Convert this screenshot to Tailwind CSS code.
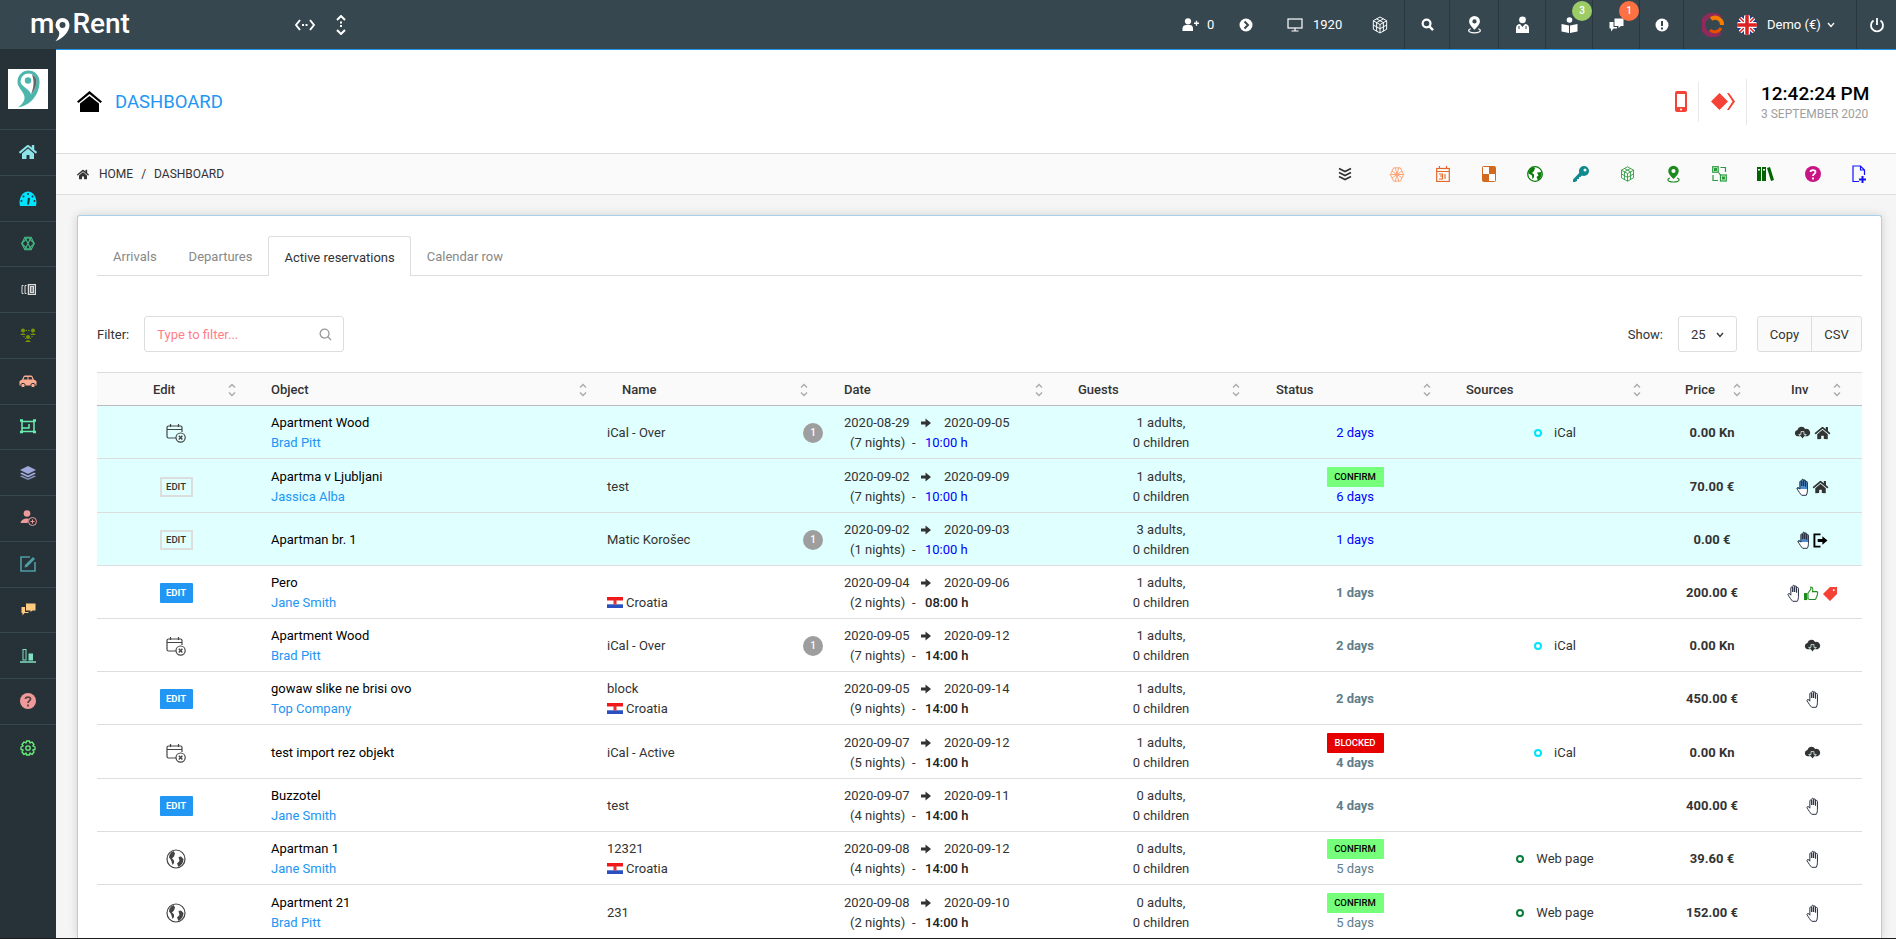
<!DOCTYPE html>
<html lang="en">
<head>
<meta charset="UTF-8">
<title>myRent Dashboard</title>
<script src="https://cdn.jsdelivr.net/npm/@tailwindcss/browser@4"></script>
</head>
<body class="h-screen overflow-hidden bg-[#f5f5f5] font-['Roboto',sans-serif] text-[13px] leading-[20px] text-[#333]">

<!-- shared icons -->
<svg class="absolute h-0 w-0">
  <defs><linearGradient id="hand-blue" x1="0" y1="0" x2="0" y2="1"><stop offset="0.6" stop-color="#4a8ccc"/><stop offset="0.6" stop-color="#fff"/></linearGradient></defs>
  <symbol id="i-home" viewBox="0 0 576 512"><path d="M280.37 148.26L96 300.11V464a16 16 0 0 0 16 16l112.06-.29a16 16 0 0 0 15.92-16V368a16 16 0 0 1 16-16h64a16 16 0 0 1 16 16v95.64a16 16 0 0 0 16 16.05L464 480a16 16 0 0 0 16-16V300L295.67 148.26a12.19 12.19 0 0 0-15.3 0zM571.6 251.47L488 182.56V44.05a12 12 0 0 0-12-12h-56a12 12 0 0 0-12 12v72.61L318.47 43a48 48 0 0 0-61 0L4.34 251.47a12 12 0 0 0-1.6 16.9l25.5 31A12 12 0 0 0 45.15 301l235.22-193.74a12.19 12.19 0 0 1 15.3 0L530.9 301a12 12 0 0 0 16.9-1.6l25.5-31a12 12 0 0 0-1.7-16.93z"/></symbol>
  <symbol id="i-sort" viewBox="0 0 8 14"><path d="M1 4.5L4 1.5L7 4.5M1 9.5L4 12.5L7 9.5" fill="none" stroke="#aaa" stroke-width="1.4"/></symbol>
  <symbol id="i-arrow" viewBox="0 0 10 10"><path d="M0 3.5H4.5V0.5L10 5L4.5 9.5V6.5H0Z" fill="#333"/></symbol>
  <symbol id="i-cal" viewBox="0 0 20 20"><g fill="none" stroke="#444" stroke-width="1.2"><path d="M10 15H2.5A1.5 1.5 0 0 1 1 13.5V4.5A1.5 1.5 0 0 1 2.5 3H14.5A1.5 1.5 0 0 1 16 4.5V9"/><path d="M1 6.5H16M4.5 1V4M12.5 1V4"/><circle cx="14.6" cy="14.6" r="4.6"/><path d="M12.8 12.8L16.4 16.4M16.4 12.8L12.8 16.4" stroke-width="1.4"/></g></symbol>
  <symbol id="i-globe" viewBox="0 0 20 20"><circle cx="10" cy="10" r="9" fill="#fff" stroke="#444" stroke-width="1.2"/><path d="M7.5 2C5 3 3 5.5 3 8.5C4 9.5 5 10.5 5.5 12.5L6.5 16L8 14V11.5L6 9.5L8 7.5L9 4.5ZM12.5 8L15 7.5L17.5 10C17.5 13.5 15.5 16.5 12.5 18L11 14.5L13.5 12Z" fill="#444"/></symbol>
  <symbol id="i-hand" viewBox="0 0 12.500 18"><path d="M5.5 17.3C3.800 15.800 2.400 13.200 0.900 11.100C0.200 10 1.600 8.900 2.600 9.900L3.600 11.200V3.900C3.600 2.600 5.500 2.600 5.500 3.900V8V2.300C5.500 0.900 7.400 0.900 7.400 2.300V8V2.900C7.400 1.600 9.300 1.600 9.300 2.900V8.500V4.400C9.300 3.100 11.200 3.100 11.200 4.400V12.200C11.200 14.400 10.800 15.900 10 17.300Z" stroke="#2b3244" stroke-width="1" stroke-linejoin="round"/></symbol>
  <symbol id="i-cloud" viewBox="0 0 18 14"><path d="M4 10.5A3.4 3.4 0 0 1 3.6 3.8A4.4 4.4 0 0 1 11.8 2.8A3.9 3.9 0 0 1 14.2 10.5Z" fill="#333"/><path d="M7.4 5.5H10.6V8.5H13L9 13L5 8.5H7.4Z" fill="#333" stroke="#e0ffff" stroke-width="0.8"/></symbol>
  <symbol id="i-exit" viewBox="0 0 16 16"><path d="M8 1.5H1.5V14.5H8" fill="none" stroke="#000" stroke-width="2"/><path d="M5 6.5H10V3.5L15.5 8L10 12.5V9.5H5Z" fill="#000"/></symbol>
  <symbol id="i-thumb" viewBox="0 0 16 16"><path d="M0.5 7.5H4V15H0.5Z" fill="#1c8a1c"/><path d="M4.8 7.5L7.8 3.5V1C9.8 0.8 10.5 3 9.6 6H14C15.2 6 15.5 7.2 14.8 8C15.4 8.8 15 9.8 14.3 10.2C14.6 11 14.2 11.8 13.5 12.2C13.6 13.4 12.8 14.5 11.8 14.5H6.5L4.8 13.5Z" fill="#fff" stroke="#1c8a1c" stroke-width="1.1"/></symbol>
  <symbol id="i-tag" viewBox="0 0 16 16"><path d="M0.5 8.5L8 1H15.5V8.5L8 16Z M12 3.4A1 1 0 1 0 12.01 3.4Z" fill="#f44336" fill-rule="evenodd"/></symbol>
  <symbol id="i-pin" viewBox="0 0 16 20"><path d="M8 0.8A5.8 5.8 0 0 0 2.2 6.6C2.2 10 6 13.5 8 15.6C10 13.5 13.8 10 13.8 6.6A5.8 5.8 0 0 0 8 0.8ZM8 4.4A2.3 2.3 0 1 1 8 9A2.3 2.3 0 0 1 8 4.4Z" fill-rule="evenodd"/><path d="M4 14.5C1.5 15.2 1 17 3 18C5.5 19.2 10.5 19.2 13 18C15 17 14.5 15.2 12 14.5" fill="none" stroke="currentColor" stroke-width="1.3"/></symbol>
  <symbol id="i-cube" viewBox="0 0 18 20"><g fill="none" stroke="currentColor" stroke-width="1.1"><path d="M9 1L16.5 5.2V14.8L9 19L1.5 14.8V5.2Z"/><path d="M1.5 5.2L9 9.5L16.5 5.2M9 9.5V19M5.2 3.1L12.8 7.3V17M12.8 3.1L5.2 7.3V17M1.5 10L9 14.2L16.5 10"/></g></symbol>
</svg>

<!-- top bar -->
<header class="flex h-[49px] items-center bg-[#37474f] text-white">
  <div class="flex w-[295px] items-center pl-[30px] text-[28px] leading-none font-medium">
    <span class="-mt-[2px]">m</span>
    <svg class="mt-[10px] h-[25px] w-[16px] shrink-0" viewBox="0 0 16 25"><path d="M8.5 1A7 7 0 0 0 1.500 8C1.500 10.500 3 12 4.500 14C6 16 5.500 20 1.500 24C8 22.500 15.500 15 15.500 8A7 7 0 0 0 8.500 1ZM8.500 5A3 3 0 1 1 8.500 11A3 3 0 0 1 8.500 5Z" fill="#fff" fill-rule="evenodd"/></svg>
    <span class="-mt-[2px] ml-[2px]">Rent</span>
  </div>
  <svg class="h-[14px] w-[20px]" viewBox="0 0 20 14"><path d="M5 2L1 7L5 12M15 2L19 7L15 12" fill="none" stroke="#fff" stroke-width="2"/><path d="M7 7H13" stroke="#fff" stroke-width="2" stroke-dasharray="2 1.5"/></svg>
  <svg class="ml-[20px] h-[20px] w-[12px]" viewBox="0 0 12 20"><path d="M2 5L6 1L10 5M2 15L6 19L10 15" fill="none" stroke="#fff" stroke-width="2"/><path d="M6 6.5V13.5" stroke="#fff" stroke-width="2" stroke-dasharray="2 1.5"/></svg>

  <div class="ml-auto flex h-full items-center">
    <svg class="h-[13px] w-[17px]" viewBox="0 0 17 13" fill="#fff"><circle cx="6" cy="3.3" r="3.1"/><path d="M0.5 13V10.5C0.5 8 2.5 7 4 7H8C9.5 7 11 8 11 10.5V13Z"/><path d="M12 4.5H13.8V2.7H15.2V4.5H17V5.9H15.2V7.7H13.8V5.9H12Z"/></svg>
    <span class="ml-[8px] w-[25px]">0</span>
    <svg class="ml-[7px] h-[14px] w-[14px]" viewBox="0 0 14 14"><circle cx="7" cy="7" r="6.5" fill="#fff"/><path d="M5.5 3.5L9 7L5.5 10.5" fill="none" stroke="#37474f" stroke-width="2"/></svg>
    <svg class="ml-[34px] h-[14px] w-[16px]" viewBox="0 0 16 14" fill="none" stroke="#fff" stroke-width="1.2"><rect x="1" y="1" width="14" height="9"/><path d="M8 10V13M4.5 13H11.5"/></svg>
    <span class="ml-[10px] w-[29px]">1920</span>
    <svg class="ml-[30px] mr-[16px] h-[18px] w-[16px] text-white"><use href="#i-cube"/></svg>
    <div class="flex h-full w-[45px] items-center justify-center border-l border-[#2b383e]">
      <svg class="h-[13px] w-[13px]" viewBox="0 0 14 14" fill="none" stroke="#fff"><circle cx="6" cy="6" r="4.2" stroke-width="2.4"/><path d="M9 9L13 13" stroke-width="2.6"/></svg>
    </div>
    <div class="flex h-full w-[49px] items-center justify-center border-l border-[#2b383e]">
      <svg class="h-[19px] w-[15px] fill-white text-white"><use href="#i-pin"/></svg>
    </div>
    <div class="flex h-full w-[47px] items-center justify-center border-l border-[#2b383e]">
      <svg class="h-[17px] w-[15px]" viewBox="0 0 15 17" fill="#fff"><circle cx="7.5" cy="3.8" r="3.4"/><path d="M1 17V12C1 9.5 3 8 5 8L7.5 11L10 8C12 8 14 9.5 14 12V17Z"/><path d="M4 10V13M11 10V13" stroke="#37474f"/></svg>
    </div>
    <div class="relative flex h-full w-[47px] items-center justify-center border-l border-[#2b383e]">
      <svg class="h-[16px] w-[17px]" viewBox="0 0 17 16" fill="#fff"><circle cx="8.5" cy="3" r="2.8"/><path d="M0.5 7L8 8.5V16L0.5 14.5ZM16.5 7L9 8.5V16L16.5 14.5Z"/></svg>
      <span class="absolute left-[26px] top-[1px] flex h-[20px] w-[20px] items-center justify-center rounded-full bg-[#9ccc65] text-[10px] font-medium text-white">3</span>
    </div>
    <div class="relative flex h-full w-[47px] items-center justify-center border-l border-[#2b383e]">
      <svg class="h-[14px] w-[15px]" viewBox="0 0 15 14" fill="#fff"><path d="M5.5 0.5H14.5V8H12L9.5 10V8H5.5Z"/><path d="M0.5 4H4.5V9H8V10.5H4.5L2 13.5V10.5H0.5Z"/></svg>
      <span class="absolute left-[26px] top-[1px] flex h-[20px] w-[20px] items-center justify-center rounded-full bg-[#ff7043] text-[10px] font-medium text-white">1</span>
    </div>
    <div class="flex h-full w-[44px] items-center justify-center border-l border-[#2b383e]">
      <svg class="h-[14px] w-[14px]" viewBox="0 0 14 14"><circle cx="7" cy="7" r="6.5" fill="#fff"/><path d="M7 3V8M7 9.5V11.5" stroke="#37474f" stroke-width="2"/></svg>
    </div>
    <div class="flex h-full w-[173px] items-center border-l border-[#2b383e] pl-[18px]">
      <svg class="h-[24px] w-[22px]" viewBox="0 0 22 24" fill="none"><path d="M18 5A10 10 0 1 0 18 19" stroke="#8e2a5c" stroke-width="5"/><path d="M20 12A7 7 0 0 0 9 6" stroke="#f57c00" stroke-width="4"/><path d="M19 15A7 7 0 0 1 8 17" stroke="#e65100" stroke-width="3"/></svg>
      <svg class="ml-[13px] h-[20px] w-[20px] rounded-full" viewBox="0 0 20 20"><rect width="20" height="20" fill="#1a3a8a"/><path d="M0 0L20 20M20 0L0 20" stroke="#fff" stroke-width="4"/><path d="M0 0L20 20M20 0L0 20" stroke="#d22" stroke-width="1.5"/><path d="M10 0V20M0 10H20" stroke="#fff" stroke-width="6"/><path d="M10 0V20M0 10H20" stroke="#d22" stroke-width="3.5"/></svg>
      <span class="ml-[10px]">Demo (€)</span>
      <svg class="ml-[6px] h-[6px] w-[8px]" viewBox="0 0 8 6"><path d="M1 1L4 4.5L7 1" fill="none" stroke="#fff" stroke-width="1.3"/></svg>
    </div>
    <div class="flex h-full w-[40px] items-center justify-center border-l border-[#2b383e]">
      <svg class="h-[16px] w-[16px]" viewBox="0 0 16 16" fill="none" stroke="#fff" stroke-width="1.8"><path d="M4.5 3.5A6 6 0 1 0 11.5 3.5"/><path d="M8 1V8"/></svg>
    </div>
  </div>
</header>

<div class="flex h-[889px]">
  <!-- sidebar -->
  <aside class="w-[56px] shrink-0 bg-[#263238]">
    <div class="flex h-[81px] items-center justify-center border-b border-[#37474f]">
      <div class="flex h-[40px] w-[40px] items-center justify-center bg-white">
        <svg class="h-[38px] w-[23px]" viewBox="0 0 23 38"><path d="M11.500 0.500A11 11 0 0 0 0.500 11.500C0.500 17 5 20 7 25C8.500 29 7 33 1 37.500C12 36 22.500 26 22.500 11.500A11 11 0 0 0 11.500 0.500Z" fill="#4db6ac"/><path d="M11.500 3.500A8 8 0 0 1 19.500 11.500C19.500 16 17 21 14 24.500C13 19 3.500 16 3.500 11.500A8 8 0 0 1 11.500 3.500Z" fill="#fff"/><path d="M15 4.500A8 8 0 0 1 19.500 11.500C19.500 16 17 21 14 24.500C16 19 18 13 15 4.500Z" fill="#666"/><circle cx="11" cy="10.500" r="3.200" fill="#4db6ac"/></svg>
      </div>
    </div>
    <nav class="flex flex-col">
      <a class="flex h-[45.75px] items-center justify-center border-b border-[#37474f]"><svg class="h-[16px] w-[18px] fill-[#8de4e8]"><use href="#i-home"/></svg></a>
      <a class="flex h-[45.75px] items-center justify-center border-b border-[#37474f]"><svg class="h-[15px] w-[18px]" viewBox="0 0 18 15"><path d="M1 15C-1 7 4 0.500 9 0.500C14 0.500 19 7 17 15Z" fill="#00e5ff"/><path d="M9 13.500L10 7" stroke="#263238" stroke-width="2"/><path d="M4.500 5.500V5.600M13.500 5.500V5.600M9 3V3.100M2.500 10V10.100M15.500 10V10.100" stroke="#263238" stroke-width="2" stroke-linecap="round"/></svg></a>
      <a class="flex h-[45.75px] items-center justify-center border-b border-[#37474f]"><svg class="h-[15px] w-[14px]" viewBox="0 0 18 18" fill="none" stroke="#43b581" stroke-width="1.500"><path d="M5 1H13L17 9L13 17H5L1 9Z"/><path d="M1 9L9 1L17 9L9 17ZM5 1L13 17M13 1L5 17"/></svg></a>
      <a class="flex h-[45.75px] items-center justify-center border-b border-[#37474f]"><svg class="h-[11px] w-[15px]" viewBox="0 0 15 11" fill="none" stroke="#ddd"><path d="M2.500 1.500H1V9.500H2.500M5.500 1.500H4V9.500H5.500"/><rect x="7.500" y="0.500" width="7" height="10" stroke-width="1.500"/><rect x="9.500" y="2.500" width="3" height="6" fill="#888"/></svg></a>
      <a class="flex h-[45.75px] items-center justify-center border-b border-[#37474f]"><svg class="h-[14px] w-[16px]" viewBox="0 0 16 14" fill="#7c9a00"><circle cx="3" cy="2.500" r="2"/><path d="M0.500 7C0.500 5 5.500 5 5.500 7Z"/><circle cx="13" cy="2.500" r="2"/><path d="M10.500 7C10.500 5 15.500 5 15.500 7Z"/><circle cx="8" cy="9" r="2"/><path d="M5.500 14C5.500 11.500 10.500 11.500 10.500 14Z"/><path d="M5.500 2.500H10.500M3.500 8L6 11M12.500 8L10 11" stroke="#7c9a00" stroke-dasharray="1.500 1"/></svg></a>
      <a class="flex h-[45.75px] items-center justify-center border-b border-[#37474f]"><svg class="h-[13px] w-[18px]" viewBox="0 0 18 13" fill="#ffab91"><path d="M0.500 6.500C0.500 5.500 2 5 3 4.700L4.500 1.500C4.800 0.800 5.500 0.500 6 0.500H12C12.500 0.500 13.200 0.800 13.500 1.500L15 4.700C16 5 17.500 5.500 17.500 6.500V10.500H0.500Z"/><circle cx="4" cy="10.500" r="2.200" stroke="#263238"/><circle cx="14" cy="10.500" r="2.200" stroke="#263238"/><path d="M5.500 2H8.500V4.500H4.500ZM9.500 2H12.500L13.500 4.500H9.500Z" fill="#263238"/></svg></a>
      <a class="flex h-[45.75px] items-center justify-center border-b border-[#37474f]"><svg class="h-[15px] w-[16px]" viewBox="0 0 16 15" fill="none" stroke="#69f0ae" stroke-width="1.500"><path d="M2 2.500H14V12.500H2ZM2 9H9V5"/><path d="M0 1.500H3M13 1.500H16M0 13H3M13 13H16" stroke-width="2.500"/></svg></a>
      <a class="flex h-[45.75px] items-center justify-center border-b border-[#37474f]"><svg class="h-[14px] w-[16px]" viewBox="0 0 16 14" fill="#9fa8da"><path d="M8 0L16 4L8 8L0 4Z"/><path d="M2 6.500L8 9.500L14 6.500L16 7.500L8 11.500L0 7.500Z"/><path d="M2 9.500L8 12.500L14 9.500L16 10.500L8 14L0 10.500Z" opacity=".8"/></svg></a>
      <a class="flex h-[45.75px] items-center justify-center border-b border-[#37474f]"><svg class="h-[16px] w-[17px]" viewBox="0 0 17 16"><circle cx="7" cy="3.500" r="3.300" fill="#ef9a9a"/><path d="M0.500 13C1 10 3.500 8.500 7 8.500C8.500 8.500 9 9 9 9L7.500 13Z" fill="#ef9a9a"/><circle cx="12.500" cy="11.500" r="4" fill="#263238" stroke="#ef9a9a"/><path d="M10.500 11.500H14.500M12.500 9.500V13.500" stroke="#ef9a9a"/></svg></a>
      <a class="flex h-[45.75px] items-center justify-center border-b border-[#37474f]"><svg class="h-[16px] w-[16px]" viewBox="0 0 16 16" fill="none" stroke="#4f9da6" stroke-width="1.600"><path d="M10 1H1V15H15V6"/><path d="M5 9L13 1L15 3L7 11L4.500 11.500Z" fill="#4f9da6" stroke="none"/></svg></a>
      <a class="flex h-[45.75px] items-center justify-center border-b border-[#37474f]"><svg class="h-[13px] w-[15px]" viewBox="0 0 15 13" fill="#ffcc80"><path d="M5 0.500H14.500V7.500H11.500L9.500 9V7.500H5Z"/><path d="M0.500 4H4V9H7.500V10H3.500L1.500 12.500V10H0.500Z"/></svg></a>
      <a class="flex h-[45.75px] items-center justify-center border-b border-[#37474f]"><svg class="h-[14px] w-[16px]" viewBox="0 0 16 14" fill="none" stroke="#80e0c0"><rect x="3" y="0.500" width="3" height="10.500"/><rect x="9" y="5" width="3.500" height="6" fill="#80e0c0"/><path d="M0 13H16" stroke-width="1.500"/></svg></a>
      <a class="flex h-[45.75px] items-center justify-center border-b border-[#37474f]"><svg class="h-[16px] w-[16px]" viewBox="0 0 16 16"><circle cx="8" cy="8" r="8" fill="#ef9a9a"/><path d="M5.500 6C5.500 3.500 10.500 3.500 10.500 6C10.500 8 8 7.800 8 10M8 11.500V13.500" fill="none" stroke="#5d4040" stroke-width="1.800"/></svg></a>
      <a class="flex h-[45.75px] items-center justify-center"><svg class="h-[16px] w-[16px]" viewBox="0 0 16 16" fill="none" stroke="#69f07a" stroke-width="1.300"><circle cx="8" cy="8" r="2.200"/><path d="M6.500 1H9.500L10 3L12 2L14 4.500L12.800 6L15 7V9.500L12.800 10L14 12L12 14.500L10 13L9.500 15H6.500L6 13L4 14.500L2 12L3.200 10L1 9.500V7L3.200 6L2 4.500L4 2L6 3Z" stroke-linejoin="round"/></svg></a>
    </nav>
  </aside>

  <main class="min-w-0 flex-1 overflow-hidden">
    <!-- title -->
    <div class="flex h-[105px] items-center border-y border-t-[#2196f3] border-b-[#ddd] bg-white pl-[21px] pr-[14px]">
      <svg class="h-[21px] w-[25px]" viewBox="0 0 25 21"><path d="M12.500 0L25 10.500L23.500 12L12.500 3L1.500 12L0 10.500Z"/><path d="M12.500 5L22 12.500V21H3V12.500Z"/></svg>
      <h1 class="ml-[13px] text-[18.500px] text-[#2196f3]">DASHBOARD</h1>
      <div class="ml-auto flex items-center">
        <svg class="h-[21px] w-[12px]" viewBox="0 0 12 21"><rect x="0" y="0" width="12" height="21" rx="2" fill="#f44336"/><rect x="2" y="3" width="8" height="13" fill="#fff"/><circle cx="6" cy="18.500" r="1" fill="#fff"/></svg>
        <div class="ml-[11px] h-[40px] w-px bg-[#e8e8e8]"></div>
        <svg class="ml-[12px] h-[17px] w-[24px]" viewBox="0 0 24 17" fill="#f44336"><path d="M8.500 0L17 8.500L8.500 17L0 8.500Z"/><path d="M16 0H18L24 8.500L18 17H16L21.500 8.500Z"/></svg>
        <div class="ml-[11px] h-[46px] w-px bg-[#e8e8e8]"></div>
        <div class="ml-[14px] w-[121px]">
          <div class="text-[19px] leading-[24px] font-medium text-black">12:42:24 PM</div>
          <div class="mt-[1px] text-[12px] leading-[14px] text-[#9e9e9e]">3 SEPTEMBER 2020</div>
        </div>
      </div>
    </div>

    <!-- breadcrumb -->
    <div class="flex h-[41px] items-center border-b border-[#ddd] bg-[#fafafa] pl-[21px] pr-[14px] text-[12px] uppercase">
      <svg class="h-[11px] w-[12px] fill-[#333]"><use href="#i-home"/></svg>
      <span class="ml-[10px]">Home</span><span class="ml-[8px]">/</span><span class="ml-[8px]">Dashboard</span>
      <div class="ml-auto flex items-center">
        <span class="mr-[6px] flex w-[46px] justify-center"><svg class="h-[14px] w-[14px]" viewBox="0 0 14 14" fill="none" stroke="#333" stroke-width="1.800"><path d="M1 1.500L7 4.500L13 1.500M1 5.500L7 8.500L13 5.500M1 9.500L7 12.500L13 9.500"/></svg></span>
        <span class="flex w-[46px] justify-center"><svg class="h-[15px] w-[16px]" viewBox="0 0 18 18" fill="none" stroke="#ff9e6d" stroke-width="1.100"><path d="M5 1H13L17 9L13 17H5L1 9Z"/><path d="M3 5L15 13M3 13L15 5M1 9H17M7 1L11 17M11 1L7 17"/></svg></span>
        <span class="flex w-[46px] justify-center"><svg class="h-[16px] w-[14px]" viewBox="0 0 14 16" fill="none" stroke="#e2682a" stroke-width="1.200"><rect x="0.700" y="2.500" width="12.600" height="13"/><path d="M3.500 0V3M10.500 0V3M0.700 5.500H13.300"/><path d="M3 8H6.500V10H4M6.500 10V13H3M9 8V13" stroke-width="1.100"/></svg></span>
        <span class="flex w-[46px] justify-center"><svg class="h-[16px] w-[14px]" viewBox="0 0 14 16"><rect width="14" height="16" rx="2" fill="#d2691e"/><rect x="1" y="1" width="6" height="7" fill="#fff"/><rect x="7" y="8" width="6" height="7" fill="#fff"/></svg></span>
        <span class="flex w-[46px] justify-center"><svg class="h-[16px] w-[16px]" viewBox="0 0 16 16"><circle cx="8" cy="8" r="7.300" fill="#fff" stroke="#0a7d0a" stroke-width="1.300"/><path d="M6.500 1C3.500 2 1.500 4.500 1.500 7.500L5 9.500L5.500 13.500L7 11V8.500L5 7L7 5L8 2ZM10 6.500L14.500 6C15 9 13.500 13 11 14.500L9.500 11L11.500 9.500Z" fill="#0a7d0a"/></svg></span>
        <span class="flex w-[46px] justify-center"><svg class="h-[16px] w-[16px]" viewBox="0 0 16 16" fill="#0f8a8f"><path d="M11 0A5 5 0 0 1 11 10C10 10 9.300 9.800 8.800 9.500L7.500 11H6V13H4V15L2 16H0V13.500L6.200 7C6 6.400 6 5.700 6 5A5 5 0 0 1 11 0ZM12 2.500A1.500 1.500 0 1 0 12 5.500A1.500 1.500 0 0 0 12 2.500Z" fill-rule="evenodd"/></svg></span>
        <span class="flex w-[46px] justify-center"><svg class="h-[16px] w-[15px] text-[#2a9a3c]"><use href="#i-cube"/></svg></span>
        <span class="flex w-[46px] justify-center"><svg class="h-[18px] w-[15px] fill-[#1d8a1d] text-[#1d8a1d]"><use href="#i-pin"/></svg></span>
        <span class="flex w-[46px] justify-center"><svg class="h-[16px] w-[15px]" viewBox="0 0 15 16" fill="none" stroke="#2a9a3c" stroke-width="1.200"><rect x="0.700" y="0.700" width="5.500" height="5.500"/><rect x="8.500" y="9" width="5.800" height="6"/><rect x="2.500" y="2.500" width="2" height="2" fill="#2a9a3c"/><rect x="10.500" y="11" width="2" height="2" fill="#2a9a3c"/><path d="M8.500 1.500H13.500V6M1 9V14.500H6M6.500 6.500L8.500 9"/></svg></span>
        <span class="flex w-[47px] justify-center"><svg class="h-[14px] w-[17px]" viewBox="0 0 17 14" fill="#006400"><rect width="4" height="14"/><rect x="5" y="0" width="4" height="14"/><path d="M10 1L13 0L17 13L14 14Z"/><rect x="1" y="2" width="2" height="1.500" fill="#fff"/><rect x="6" y="2" width="2" height="1.500" fill="#fff"/></svg></span>
        <span class="flex w-[47px] justify-center"><svg class="h-[16px] w-[16px]" viewBox="0 0 16 16"><circle cx="8" cy="8" r="8" fill="#c71585"/><path d="M5.500 6C5.500 3.500 10.500 3.500 10.500 6C10.500 8 8 7.800 8 10M8 11.500V13.500" fill="none" stroke="#fff" stroke-width="1.800"/></svg></span>
        <span class="flex w-[46px] justify-center"><svg class="h-[18px] w-[14px]" viewBox="0 0 14 18" fill="none" stroke="#1212ff" stroke-width="1.200"><path d="M7 16.500H1V1H8.500L12.500 5V10M8.500 1V5H12.500"/><path d="M7 14.500H14M10.500 11V18" stroke-width="2"/></svg></span>
      </div>
    </div>

    <!-- card -->
    <section class="mt-[20px] ml-[21px] mr-[14px] h-[723px] rounded-t-[3px] border border-b-0 border-[#a8d0ea] bg-white pt-[20px] pl-[19px] pr-[19px] shadow-[0_0_10px_rgba(0,0,0,0.15)]">
      <div class="flex h-[40px] border-b border-[#ddd] text-[#888]">
        <a class="flex h-[40px] items-center px-[16px] pt-[2px]">Arrivals</a>
        <a class="flex h-[40px] items-center px-[16px] pt-[2px]">Departures</a>
        <a class="flex h-[40px] items-center rounded-t-[3px] border border-b-0 border-[#ddd] bg-white px-[15px] pt-[2px] text-[#333]">Active reservations</a>
        <a class="flex h-[40px] items-center px-[16px] pt-[2px]">Calendar row</a>
      </div>

      <div class="mt-[40px] flex h-[36px] items-center">
        <span class="pt-[2px]">Filter:</span>
        <div class="ml-[15px] flex h-[36px] w-[200px] items-center justify-between rounded-[3px] border border-[#ddd] pl-[12px] pr-[11px]">
          <input class="w-[150px] pt-[2px] outline-none placeholder:text-[#ff7f88]" placeholder="Type to filter...">
          <svg class="h-[13px] w-[13px]" viewBox="0 0 14 14" fill="none" stroke="#999" stroke-width="1.400"><circle cx="6" cy="6" r="4.800"/><path d="M9.500 9.500L13 13"/></svg>
        </div>
        <span class="ml-auto pt-[2px]">Show:</span>
        <div class="ml-[15px] flex h-[36px] w-[59px] items-center rounded-[3px] border border-[#ddd] pl-[12px] pt-[2px]">25
          <svg class="ml-[10px] h-[6px] w-[8px]" viewBox="0 0 8 6"><path d="M1 1L4 4.500L7 1" fill="none" stroke="#333" stroke-width="1.300"/></svg>
        </div>
        <div class="ml-[20px] flex h-[36px] rounded-[3px] border border-[#ddd] bg-[#fafafa]">
          <span class="flex w-[54px] items-center justify-center border-r border-[#ddd] pt-[2px]">Copy</span>
          <span class="flex w-[49px] items-center justify-center pt-[2px]">CSV</span>
        </div>
      </div>

      <table class="mt-[20px] w-[1765px] table-fixed">
        <colgroup>
          <col class="w-[158px]"><col class="w-[336px]"><col class="w-[237px]"><col class="w-[234px]"><col class="w-[198px]"><col class="w-[190px]"><col class="w-[200px]"><col class="w-[124px]"><col class="w-[88px]">
        </colgroup>
        <thead>
          <tr class="h-[33px] border-y border-t-[#ddd] border-b-[#bbb] bg-[#fafafa] text-left font-medium [&>th]:pt-[2px]">
            <th class="font-medium"><div class="flex items-center justify-between pl-[56px] pr-[19px]">Edit<svg class="h-[14px] w-[8px]"><use href="#i-sort"/></svg></div></th>
            <th class="font-medium"><div class="flex items-center justify-between pl-[16px] pr-[4px]">Object<svg class="h-[14px] w-[8px]"><use href="#i-sort"/></svg></div></th>
            <th class="font-medium"><div class="flex items-center justify-between pl-[31px] pr-[20px]">Name<svg class="h-[14px] w-[8px]"><use href="#i-sort"/></svg></div></th>
            <th class="font-medium"><div class="flex items-center justify-between pl-[16px] pr-[19px]">Date<svg class="h-[14px] w-[8px]"><use href="#i-sort"/></svg></div></th>
            <th class="font-medium"><div class="flex items-center justify-between pl-[16px] pr-[20px]">Guests<svg class="h-[14px] w-[8px]"><use href="#i-sort"/></svg></div></th>
            <th class="font-medium"><div class="flex items-center justify-between pl-[16px] pr-[19px]">Status<svg class="h-[14px] w-[8px]"><use href="#i-sort"/></svg></div></th>
            <th class="font-medium"><div class="flex items-center justify-between pl-[16px] pr-[9px]">Sources<svg class="h-[14px] w-[8px]"><use href="#i-sort"/></svg></div></th>
            <th class="font-medium"><div class="flex items-center justify-between pl-[35px] pr-[33px]">Price<svg class="h-[14px] w-[8px]"><use href="#i-sort"/></svg></div></th>
            <th class="font-medium"><div class="flex items-center justify-between pl-[17px] pr-[21px]">Inv<svg class="h-[14px] w-[8px]"><use href="#i-sort"/></svg></div></th>
          </tr>
        </thead>
        <tbody id="rows"></tbody>
      </table>
    </section>
  </main>
</div>
<div class="h-[1px] bg-[#1c1c1c]"></div>

<script>
  const flag = '<svg class="mr-[3px] inline-block h-[11px] w-[16px] align-[-1px]" viewBox="0 0 16 11"><rect width="16" height="3.700" fill="#f01818"/><rect y="3.700" width="16" height="3.700" fill="#fff"/><rect y="7.300" width="16" height="3.700" fill="#2a50c0"/><rect x="6.500" y="2.500" width="3" height="5" fill="#d33"/></svg>';
  const icons = {
    cal: '<svg class="mx-auto block h-[20px] w-[20px]"><use href="#i-cal"/></svg>',
    globe: '<svg class="mx-auto block h-[20px] w-[20px]"><use href="#i-globe"/></svg>',
    editGray: '<span class="mx-auto block h-[20px] w-[33px] border-2 border-[#ddd] text-center text-[9.500px] leading-[16px] font-medium">EDIT</span>',
    editBlue: '<span class="mx-auto block h-[20px] w-[33px] rounded-[1px] bg-[#2196f3] text-center text-[9.500px] leading-[20px] font-bold text-white">EDIT</span>'
  };
  const inv = {
    cloud: '<svg class="h-[14px] w-[17px]"><use href="#i-cloud"/></svg>',
    house: '<svg class="h-[14px] w-[17px] fill-[#333]"><use href="#i-home"/></svg>',
    handBlue: '<svg class="h-[18px] w-[13px]" fill="url(#hand-blue)"><use href="#i-hand"/></svg>',
    hand: '<svg class="h-[18px] w-[13px] fill-white"><use href="#i-hand"/></svg>',
    exit: '<svg class="h-[15px] w-[15px]"><use href="#i-exit"/></svg>',
    thumb: '<svg class="h-[15px] w-[16px]"><use href="#i-thumb"/></svg>',
    tag: '<svg class="h-[15px] w-[16px]"><use href="#i-tag"/></svg>'
  };
  const badgeGreen = '<span class="mx-auto block h-[20px] w-[57px] rounded-[1px] bg-[#76ff7a] text-[9.500px] leading-[20px] font-medium text-black">CONFIRM</span>';
  const badgeRed = '<span class="mx-auto block h-[20px] w-[57px] rounded-[1px] bg-[#e60000] text-[9.500px] leading-[20px] font-medium text-white">BLOCKED</span>';
  const ical = '<span class="flex items-center justify-center pl-[10px]"><span class="mr-[12px] h-[8px] w-[8px] rounded-full border-2 border-[#00e5ff]"></span>iCal</span>';
  const web = '<span class="flex items-center justify-center pl-[10px]"><span class="mr-[12px] h-[8px] w-[8px] rounded-full border-2 border-[#0a7d3c]"></span>Web page</span>';

  // one entry per reservation, in the order of the table
  const data = [
    {h:53,hi:1,ic:'cal',t:'Apartment Wood',p:'Brad Pitt',n:['iCal - Over'],b:1,d1:'2020-08-29',d2:'2020-09-05',nn:7,tm:'10:00 h',g:1,day:'2 days',dc:'blue',src:ical,pr:'0.00 Kn',inv:['cloud','house']},
    {h:54,hi:1,ic:'editGray',t:'Apartma v Ljubljani',p:'Jassica Alba',n:['test'],d1:'2020-09-02',d2:'2020-09-09',nn:7,tm:'10:00 h',g:1,day:'6 days',dc:'blue',st:badgeGreen,pr:'70.00 €',inv:['handBlue','house']},
    {h:53,hi:1,ic:'editGray',t:'Apartman br. 1',n:['Matic Korošec'],b:1,d1:'2020-09-02',d2:'2020-09-03',nn:1,tm:'10:00 h',g:3,day:'1 days',dc:'blue',pr:'0.00 €',inv:['handBlue','exit']},
    {h:53,ic:'editBlue',t:'Pero',p:'Jane Smith',n:['','F'],d1:'2020-09-04',d2:'2020-09-06',nn:2,tm:'08:00 h',g:1,day:'1 days',dc:'gray',pr:'200.00 €',inv:['hand','thumb','tag']},
    {h:53,ic:'cal',t:'Apartment Wood',p:'Brad Pitt',n:['iCal - Over'],b:1,d1:'2020-09-05',d2:'2020-09-12',nn:7,tm:'14:00 h',g:1,day:'2 days',dc:'gray',src:ical,pr:'0.00 Kn',inv:['cloud']},
    {h:53,ic:'editBlue',t:'gowaw slike ne brisi ovo',p:'Top Company',n:['block','F'],d1:'2020-09-05',d2:'2020-09-14',nn:9,tm:'14:00 h',g:1,day:'2 days',dc:'gray',pr:'450.00 €',inv:['hand']},
    {h:54,ic:'cal',t:'test import rez objekt',n:['iCal - Active'],d1:'2020-09-07',d2:'2020-09-12',nn:5,tm:'14:00 h',g:1,day:'4 days',dc:'gray',st:badgeRed,src:ical,pr:'0.00 Kn',inv:['cloud']},
    {h:53,ic:'editBlue',t:'Buzzotel',p:'Jane Smith',n:['test'],d1:'2020-09-07',d2:'2020-09-11',nn:4,tm:'14:00 h',g:0,day:'4 days',dc:'gray',pr:'400.00 €',inv:['hand']},
    {h:53,ic:'globe',t:'Apartman 1',p:'Jane Smith',n:['12321','F'],d1:'2020-09-08',d2:'2020-09-12',nn:4,tm:'14:00 h',g:0,day:'5 days',dc:'plain',st:badgeGreen,src:web,pr:'39.60 €',inv:['hand']},
    {h:54,ic:'globe',t:'Apartment 21',p:'Brad Pitt',n:['231'],d1:'2020-09-08',d2:'2020-09-10',nn:2,tm:'14:00 h',g:0,day:'5 days',dc:'plain',st:badgeGreen,src:web,pr:'152.00 €',inv:['hand']}
  ];
  const dayClass = {blue:'text-[#0000ff]', gray:'font-bold text-[#607d8b]', plain:'text-[#607d8b]'};

  document.getElementById('rows').innerHTML = data.map(r => {
    const name = r.n[0] + (r.n[1] ? '<br>' + flag + 'Croatia' : '');
    const badge = r.b ? '<span class="flex h-[20px] w-[20px] items-center justify-center rounded-full bg-[#9e9e9e] text-[10px] font-medium text-white">1</span>' : '';
    return `<tr class="${r.h == 54 ? 'h-[54px]' : 'h-[53px]'} border-b border-[#ddd] [&>td]:pt-[2px] ${r.hi ? 'bg-[#e0ffff]' : 'bg-white'}">
      <td>${icons[r.ic]}</td>
      <td class="pl-[16px] text-black">${r.t}${r.p ? `<br><a class="text-[#2196f3]">${r.p}</a>` : ''}</td>
      <td><div class="flex items-center justify-between pl-[16px] pr-[5px]"><div>${name}</div>${badge}</div></td>
      <td class="pl-[16px]">
        <div class="flex items-center"><span class="w-[72px]">${r.d1}</span><span class="flex w-[20px] justify-center"><svg class="h-[10px] w-[10px]"><use href="#i-arrow"/></svg></span><span class="ml-[8px]">${r.d2}</span></div>
        <div class="flex pl-[6px]"><span class="w-[62px]">(${r.nn} nights)</span><span class="w-[13px]">-</span><span class="${r.hi ? 'text-[#0000ff]' : 'font-medium text-[#222]'}">${r.tm}</span></div>
      </td>
      <td class="text-center">${r.g} adults,<br>0 children</td>
      <td class="text-center ${dayClass[r.dc]}">${r.st || ''}${r.day}</td>
      <td>${r.src || ''}</td>
      <td class="text-center font-bold">${r.pr}</td>
      <td class="pr-[12px]"><div class="flex items-center justify-center gap-[3px]">${r.inv.map(i => inv[i]).join('')}</div></td>
    </tr>`;
  }).join('');
</script>
</body>
</html>
